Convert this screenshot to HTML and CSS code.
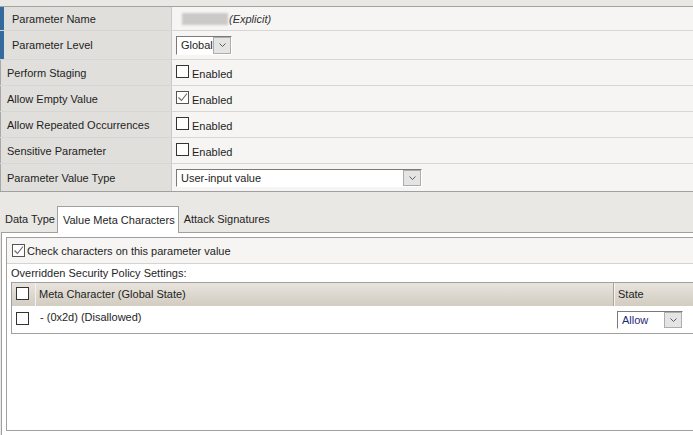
FILE: index.html
```html
<!DOCTYPE html>
<html>
<head>
<meta charset="utf-8">
<title>Parameter</title>
<link rel="stylesheet" href="styles.css">
</head>
<body>
<div class="page">
  <div class="props">
    <div class="row r1">
      <div class="label req">Parameter Name</div>
      <div class="value"><span class="redacted"></span><span class="explicit">(Explicit)</span></div>
    </div>
    <div class="row r2">
      <div class="label req">Parameter Level</div>
      <div class="value">
        <div class="select sel-global"><span class="sel-text">Global</span><span class="sel-btn"><svg width="7" height="4" viewBox="0 0 7 4"><path d="M0.5 0.5 L3.5 3.5 L6.5 0.5" fill="none" stroke="#5c5c5c" stroke-width="1"/></svg></span></div>
      </div>
    </div>
    <div class="row r3">
      <div class="label">Perform Staging</div>
      <div class="value"><div class="check"><span class="cb"></span><span class="txt">Enabled</span></div></div>
    </div>
    <div class="row r3">
      <div class="label">Allow Empty Value</div>
      <div class="value"><div class="check"><span class="cb checked"><svg width="11" height="11" viewBox="0 0 11 11"><path d="M1.5 5.5 L4.5 8.5 L10 1.5" fill="none" stroke="#666" stroke-width="1.1"/></svg></span><span class="txt">Enabled</span></div></div>
    </div>
    <div class="row r3">
      <div class="label">Allow Repeated Occurrences</div>
      <div class="value"><div class="check"><span class="cb"></span><span class="txt">Enabled</span></div></div>
    </div>
    <div class="row r3">
      <div class="label">Sensitive Parameter</div>
      <div class="value"><div class="check"><span class="cb"></span><span class="txt">Enabled</span></div></div>
    </div>
    <div class="row r7">
      <div class="label">Parameter Value Type</div>
      <div class="value">
        <div class="select sel-type"><span class="sel-text">User-input value</span><span class="sel-btn"><svg width="7" height="4" viewBox="0 0 7 4"><path d="M0.5 0.5 L3.5 3.5 L6.5 0.5" fill="none" stroke="#5c5c5c" stroke-width="1"/></svg></span></div>
      </div>
    </div>
  </div>

  <div class="tabs">
    <div class="tab">Data Type</div>
    <div class="tab active">Value Meta Characters</div>
    <div class="tab">Attack Signatures</div>
  </div>

  <div class="panel">
    <div class="inner">
      <div class="check-row">
        <div class="check check-main"><span class="cb checked"><svg width="11" height="11" viewBox="0 0 11 11"><path d="M1.5 5.5 L4.5 8.5 L10 1.5" fill="none" stroke="#666" stroke-width="1.1"/></svg></span><span class="txt">Check characters on this parameter value</span></div>
      </div>
      <div class="caption">Overridden Security Policy Settings:</div>
      <div class="grid">
        <div class="ghead">
          <div class="c1"><span class="cb"></span></div>
          <div class="c2">Meta Character (Global State)</div>
          <div class="c3">State</div>
        </div>
        <div class="grow">
          <div class="c1"><span class="cb"></span></div>
          <div class="c2">- (0x2d) (Disallowed)</div>
          <div class="c3">
            <div class="select sel-allow"><span class="sel-text">Allow</span><span class="sel-btn"><svg width="7" height="4" viewBox="0 0 7 4"><path d="M0.5 0.5 L3.5 3.5 L6.5 0.5" fill="none" stroke="#5c5c5c" stroke-width="1"/></svg></span></div>
          </div>
        </div>
      </div>
    </div>
  </div>
</div>
</body>
</html>
```

FILE: styles.css
```css
* { box-sizing: border-box; }
html, body { margin: 0; padding: 0; }
body {
  background: #eae8e4;
  font-family: "Liberation Sans", Arial, sans-serif;
  font-size: 11px;
  color: #1e1e1e;
  overflow: hidden;
}
.page { width: 720px; padding-top: 6px; }

/* property table */
.props {
  border-top: 1px solid #a3a3a3;
  border-bottom: 1px solid #a0a0a0;
  background: #f6f5f3;
}
.row {
  display: grid;
  grid-template-columns: 172px 1fr;
  border-bottom: 1px solid #d6d6d6;
}
.row:last-child { border-bottom: none; }
.r1 { height: 24px; }
.r2 { height: 29px; }
.r3 { height: 26px; }
.r7 { height: 27px; }

.label {
  display: flex;
  align-items: center;
  background: #e0dfdb;
  border-right: 1px solid #c9c9c9;
  border-left: 1px solid #a8a8a8;
  padding-left: 6px;
  white-space: nowrap;
}
.label.req {
  border-left: 4px solid #356a9c;
  padding-left: 8px;
}
.value {
  display: flex;
  align-items: center;
  padding-left: 4px;
}
.redacted {
  display: inline-block;
  width: 46px;
  height: 12px;
  margin-left: 6px;
  background: #c9c9c9;
  filter: blur(0.8px);
}
.explicit { font-style: italic; color: #333; margin-left: 1px; }

/* select */
.select {
  display: inline-flex;
  align-items: stretch;
  background: #fff;
  border: 1px solid;
  border-color: #7a7a7a #ffffff #ffffff #7a7a7a;
}
.sel-text {
  flex: 1;
  display: flex;
  align-items: center;
  padding-left: 4px;
  white-space: nowrap;
}
.sel-btn {
  width: 18px;
  display: flex;
  align-items: center;
  justify-content: center;
  background: #e4e4e4;
  border: 1px solid #adadad;
}
.sel-global { width: 56px; height: 19px; }
.sel-type { width: 246px; height: 18px; }
.sel-allow { width: 66px; height: 18px; }
.sel-allow .sel-text { color: #1f2a78; }

/* checkbox */
.check {
  display: flex;
  align-items: flex-start;
  height: 15px;
}
.cb {
  display: inline-flex;
  align-items: center;
  justify-content: center;
  width: 13px;
  height: 13px;
  flex: none;
  background: #fff;
  border: 1px solid #333;
}
.cb.checked { border-color: #555; }
.check .txt {
  margin-top: 3px;
  margin-left: 3px;
  line-height: 13px;
  white-space: nowrap;
}
.check-main { height: 13px; }
.check-main .txt { margin-top: 1px; margin-left: 2px; }

/* tabs */
.tabs {
  display: flex;
  align-items: flex-end;
  height: 40px;
}
.tab {
  height: 25px;
  line-height: 25px;
  padding: 0 2px 0 5px;
  white-space: nowrap;
}
.tab.active {
  height: 27px;
  line-height: 26px;
  padding-right: 3px;
  background: #fff;
  border: 1px solid #a0a0a0;
  border-bottom: none;
  margin-bottom: -1px;
  position: relative;
  z-index: 1;
}

/* panel */
.panel {
  margin-left: 1px;
  border-left: 1px solid #a0a0a0;
  border-top: 1px solid #a0a0a0;
  background: #fff;
  padding: 4px 0 0 4px;
  height: 215px;
}
.inner {
  border: 1px solid #a0a0a0;
  height: 194px;
}
.check-row {
  height: 26px;
  background: #f6f5f3;
  border-bottom: 1px solid #d4d4d4;
  display: flex;
  align-items: center;
  padding-left: 5px;
}
.caption {
  height: 18px;
  line-height: 18px;
  padding-left: 4px;
}

/* grid */
.grid {
  margin-left: 4px;
  border: 1px solid #a0a0a0;
}
.ghead, .grow {
  display: grid;
  grid-template-columns: 24px 578px 1fr;
}
.ghead {
  height: 23px;
  background: linear-gradient(#e8e4dd, #d2ccc1);
}
.ghead .c1 { border-right: 1px solid #f4f2ee; padding: 4px 0 0 4px; }
.ghead .c2 { border-right: 1px solid #a8a49c; line-height: 23px; padding-left: 3px; }
.ghead .c3 { border-left: 1px solid #f7f5f1; line-height: 23px; padding-left: 3px; }
.grow { height: 27px; background: #fff; }
.grow .c1 { padding: 6px 0 0 4px; }
.grow .c2 { padding: 5px 0 0 4px; line-height: 13px; }
.grow .c3 { padding: 5px 0 0 3px; }
```
